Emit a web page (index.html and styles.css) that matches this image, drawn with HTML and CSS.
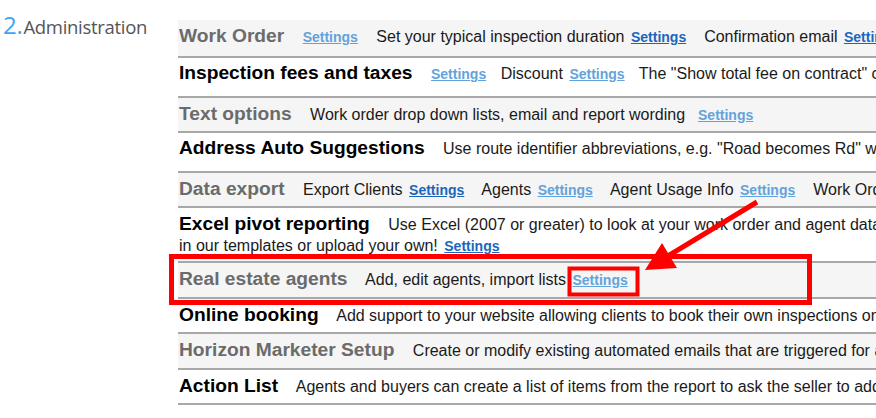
FILE: index.html
```html
<!DOCTYPE html>
<html lang="en">
<head>
    <meta charset="UTF-8">
    <meta name="viewport" content="width=device-width, initial-scale=1.0">
    <title>Administration</title>
    <link rel="stylesheet" href="styles.css">
</head>
<body>
    <div class="page">
        <div class="side">
            <h2 class="step"><span class="step-num">2.</span>Administration</h2>
        </div>

        <!-- Settings list -->
        <div class="settings">
            <div class="row shaded first">
                <span class="title">Work Order</span>
                <a href="#" class="link visited">Settings</a>
                <span class="item">Set your typical inspection duration <a href="#" class="link">Settings</a></span>
                <span class="item">Confirmation email <a href="#" class="link">Settings</a></span>
            </div>
            <div class="row tall">
                <span class="title">Inspection fees and taxes</span>
                <a href="#" class="link visited near">Settings</a>
                <span class="item near">Discount <a href="#" class="link visited">Settings</a></span>
                <span class="item near">The "Show total fee on contract" checkbox has moved</span>
            </div>
            <div class="row shaded">
                <span class="title">Text options</span>
                <span class="item">Work order drop down lists, email and report wording</span>
                <a href="#" class="link visited spaced">Settings</a>
            </div>
            <div class="row tall">
                <span class="title">Address Auto Suggestions</span>
                <span class="item">Use route identifier abbreviations, e.g. "Road becomes Rd" when suggesting addresses</span>
            </div>
            <div class="row shaded">
                <span class="title">Data export</span>
                <span class="item">Export Clients <a href="#" class="link">Settings</a></span>
                <span class="item">Agents <a href="#" class="link visited">Settings</a></span>
                <span class="item">Agent Usage Info <a href="#" class="link visited">Settings</a></span>
                <span class="item">Work Orders <a href="#" class="link">Settings</a></span>
            </div>
            <div class="row wrap">
                <span class="title">Excel pivot reporting</span>
                <span class="item">Use Excel (2007 or greater) to look at your work order and agent data. Drop it</span><br>
                in our templates or upload your own! <a href="#" class="link">Settings</a>
            </div>
            <div class="row shaded">
                <span class="title">Real estate agents</span>
                <span class="item">Add, edit agents, import lists <a href="#" class="link visited">Settings</a></span>
            </div>
            <div class="row">
                <span class="title">Online booking</span>
                <span class="item">Add support to your website allowing clients to book their own inspections online</span>
            </div>
            <div class="row shaded">
                <span class="title">Horizon Marketer Setup</span>
                <span class="item">Create or modify existing automated emails that are triggered for agents and clients</span>
            </div>
            <div class="row">
                <span class="title">Action List</span>
                <span class="item">Agents and buyers can create a list of items from the report to ask the seller to address</span>
            </div>
        </div>
    </div>

    <!-- Red call-out drawn over the page -->
    <svg class="callout" width="876" height="418" viewBox="0 0 876 418">
        <rect x="171.5" y="256.5" width="638" height="46" fill="none" stroke="#f00" stroke-width="5"/>
        <rect x="569.5" y="268.5" width="68" height="26" fill="none" stroke="#f00" stroke-width="4"/>
        <line x1="757" y1="202" x2="668" y2="256" stroke="#f00" stroke-width="5"/>
        <polygon points="645,270 662,243 677,268" fill="#f00"/>
    </svg>
</body>
</html>
```

FILE: styles.css
```css
body {
    margin: 0;
    background-color: white;
    font-family: "Liberation Sans", Arial, sans-serif;
    color: #1a1a1a;
    overflow: hidden;
}
.page {
    display: flex;
    align-items: flex-start;
    width: 1400px;
}
.side {
    flex: 0 0 178px;
}
.step {
    margin: 0;
    padding: 12px 0 0 3px;
    font-family: "Open Sans", "Noto Sans", sans-serif;
    font-weight: 500;
    font-size: 18.5px;
    letter-spacing: -0.3px;
    line-height: 26px;
    color: #555;
}
.step-num {
    font-size: 24px;
    color: #3ea6ee;
    margin-right: 1px;
}
.settings {
    flex: 1;
    margin-top: 20px;
}
.row {
    padding: 6px 0 5.5px 1px;
    line-height: 22px;
    font-size: 16px;
    white-space: nowrap;
    border-bottom: 2px solid #a8a8a8;
}
.row.first {
    padding-top: 6px;
    padding-bottom: 8px;
}
.row.tall {
    padding-top: 5px;
    padding-bottom: 10.5px;
}
.row.wrap {
    line-height: 21px;
    padding-top: 6px;
    padding-bottom: 5px;
}
.row.shaded {
    background-color: #f5f5f5;
}
.title {
    font-size: 19.2px;
    line-height: 1;
    font-weight: bold;
    color: #000;
    margin-right: 14px;
}
.shaded .title {
    color: #6b6b6b;
}
.item {
    margin-right: 13.5px;
}
.item.near {
    margin-right: 10px;
}
.link {
    font-size: 14px;
    line-height: 1;
    font-weight: bold;
    color: #1b66bd;
    text-decoration: underline;
}
.link.visited {
    color: #63a3dc;
}
.item .link,
.wrap > .link {
    margin-left: 2px;
}
.title + .link {
    margin-right: 14px;
}
.title + .link.near {
    margin-right: 10px;
}
.link.spaced {
    margin-left: -5px;
}
.callout {
    position: absolute;
    left: 0;
    top: 0;
    pointer-events: none;
}
```
